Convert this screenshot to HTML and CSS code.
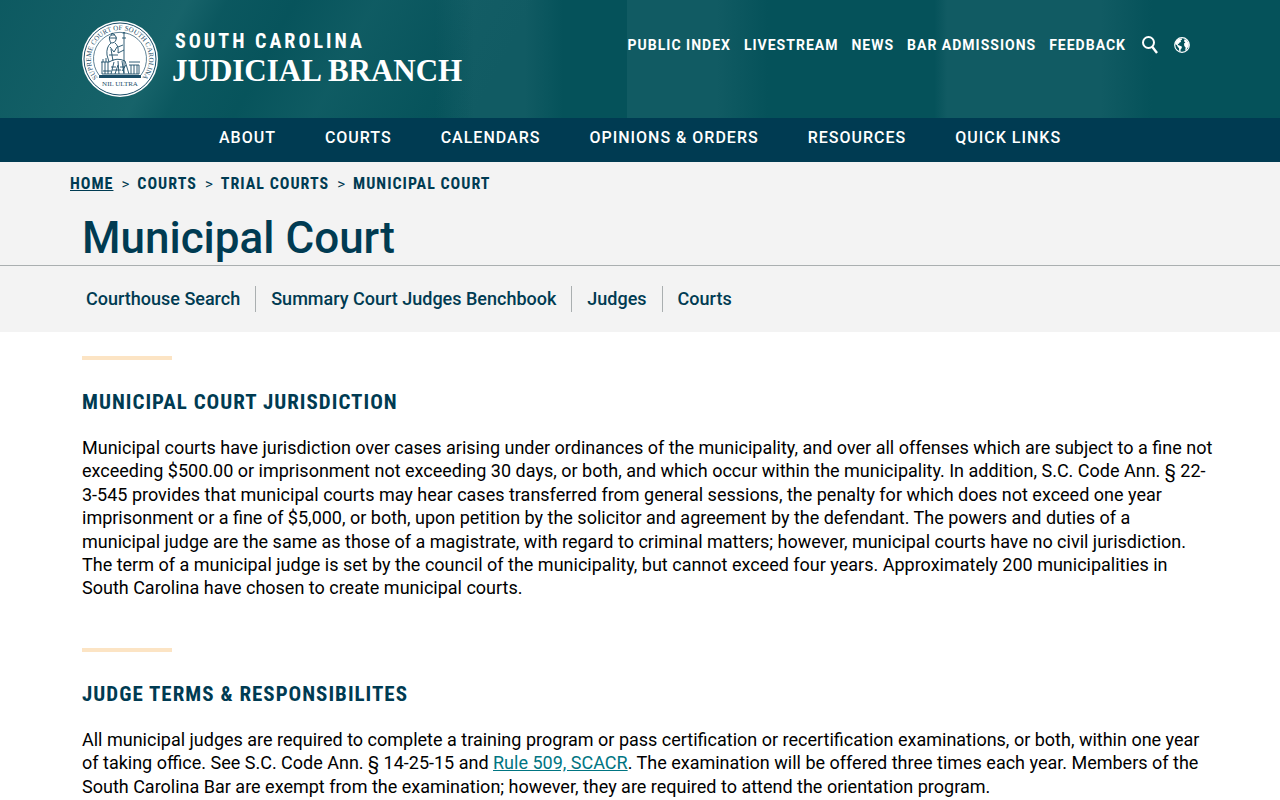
FILE: index.html
```
<!DOCTYPE html>
<html lang="en">
<head>
    <meta charset="UTF-8">
    <meta name="viewport" content="width=device-width, initial-scale=1.0">
    <title>Municipal Court - South Carolina Judicial Branch</title>
    <link rel="stylesheet" href="styles.css">
</head>
<body>
    <header class="site-header">
        <div class="container header-row">
            <a class="brand" href="#">
                <svg class="seal" viewBox="0 0 76 76" aria-hidden="true">
                    <defs>
                        <path id="seal-arc" d="M20.3 61 A29 29 0 1 1 55.7 61"/>
                    </defs>
                    <circle cx="38" cy="38" r="38" fill="#fff"/>
                    <circle cx="38" cy="38" r="36" fill="none" stroke="#1b4d68" stroke-width="1"/>
                    <path d="M17 54 A26.5 26.5 0 1 1 59 54" fill="none" stroke="#1b4d68" stroke-width="0.7"/>
                    <text class="seal-text"><textPath href="#seal-arc" startOffset="50%" text-anchor="middle">SUPREME COURT OF SOUTH CAROLINA</textPath></text>
                    <rect x="17" y="54" width="42" height="3" fill="#1b4d68"/>
                    <g fill="none" stroke="#1b4d68" stroke-width="0.9">
                        <path d="M42 13 V52 M40 17 H44 M41 13 L42 11 L43 13"/>
                        <path d="M28 20 Q26 15 30 14 Q35 13 34 19 Q33 22 30 22 Q28 22 28 20 M27 17 H35 M29 14 L30 12 L33 14"/>
                        <path d="M29 22 Q24 26 25 34 L27 41 M33 22 Q37 25 36 32 L42 29 M36 26 L41 24 M28 26 L32 31 L35 26 M27 34 H36 M29 28 L31 40"/>
                        <path d="M27 41 Q35 36 43 40 L47 53 M32 41 L29 53 M36 40 L37 53 M40 40 L42 53 M33 53 L36 44 M44 44 L40 50"/>
                        <path d="M19 41 H27 M20 41 V53 M23 41 V53 M26 41 V53 M21 38 V41 M24 37 V41 M47 41 H58 M47 44 H57 M49 44 V53 M52 44 V53 M55 44 V53 M57 44 V53"/>
                        <path d="M29 46 H34 M30 49 H39 M38 46 H43 M21 50 H29 M20 53 H57"/>
                    </g>
                    <text class="seal-text" x="38" y="65" text-anchor="middle">NIL ULTRA</text>
                </svg>
                <span class="brand-text">
                    <span class="brand-state">South Carolina</span>
                    <span class="brand-name">JUDICIAL BRANCH</span>
                </span>
            </a>
            <nav class="top-links" aria-label="Utility">
                <a href="#">Public Index</a>
                <a href="#">Livestream</a>
                <a href="#">News</a>
                <a href="#">Bar Admissions</a>
                <a href="#">Feedback</a>
                <div class="top-icons">
                    <button class="icon-button" aria-label="Search">
                        <svg viewBox="0 0 16 18" width="16" height="18" fill="none" stroke="#fff" stroke-width="2">
                            <circle cx="6.5" cy="6.5" r="5.5"/>
                            <path d="M10.2 10.8 L15 17" stroke-width="2.4"/>
                        </svg>
                    </button>
                    <button class="icon-button" aria-label="Language">
                        <svg viewBox="0 0 16 16" width="16" height="16">
                            <circle cx="8" cy="8" r="7.3" fill="none" stroke="#fff" stroke-width="1.2"/>
                            <path fill="#fff" d="M1 7 L2.5 3.5 L5 1.8 L8 1.5 L7.8 3 L6.6 3.3 L7 5 L5.6 5.6 L4.8 7 L3.8 6.4 L4 8 L5.4 8.5 L7.8 9.5 L7.8 11 L6.6 12.5 L6.4 15 L5.2 14 L5 11.2 L3.6 9.8 L3 8.2 Z"/>
                            <path fill="#fff" d="M10.5 2.2 L12.5 3 L14.8 6.5 L14.7 10 L13.2 11 L12.6 13 L11.2 13.8 L11.6 10.5 L10.3 9 L10 6.5 L11.4 5.4 L10 4.2 Z"/>
                        </svg>
                    </button>
                </div>
            </nav>
        </div>
    </header>

    <nav class="main-nav" aria-label="Main">
        <a href="#">About</a>
        <a href="#">Courts</a>
        <a href="#">Calendars</a>
        <a href="#">Opinions &amp; Orders</a>
        <a href="#">Resources</a>
        <a href="#">Quick Links</a>
    </nav>

    <section class="page-title">
        <nav class="breadcrumb" aria-label="Breadcrumb">
            <a class="home" href="#">Home</a>
            <span class="separator">&gt;</span>
            <a href="#">Courts</a>
            <span class="separator">&gt;</span>
            <a href="#">Trial Courts</a>
            <span class="separator">&gt;</span>
            <a href="#">Municipal Court</a>
        </nav>
        <div class="container">
            <h1>Municipal Court</h1>
        </div>
    </section>

    <nav class="sub-nav" aria-label="Municipal Court">
        <div class="container sub-links">
            <a href="#">Courthouse Search</a>
            <a href="#">Summary Court Judges Benchbook</a>
            <a href="#">Judges</a>
            <a href="#">Courts</a>
        </div>
    </nav>

    <main class="container">
        <section class="content-block">
            <h2>Municipal Court Jurisdiction</h2>
            <p>Municipal courts have jurisdiction over cases arising under ordinances of the municipality, and over all offenses which are subject to a fine not exceeding $500.00 or imprisonment not exceeding 30 days, or both, and which occur within the municipality. In addition, S.C. Code Ann. § 22-3-545 provides that municipal courts may hear cases transferred from general sessions, the penalty for which does not exceed one year imprisonment or a fine of $5,000, or both, upon petition by the solicitor and agreement by the defendant. The powers and duties of a<br>municipal judge are the same as those of a magistrate, with regard to criminal matters; however, municipal courts have no civil jurisdiction. The term of a municipal judge is set by the council of the municipality, but cannot exceed four years. Approximately 200 municipalities in South Carolina have chosen to create municipal courts.</p>
        </section>
        <section class="content-block">
            <h2>Judge Terms &amp; Responsibilites</h2>
            <p>All municipal judges are required to complete a training program or pass certification or recertification examinations, or both, within one year of taking office. See S.C. Code Ann. § 14-25-15 and <a href="#">Rule 509, SCACR</a>. The examination will be offered three times each year. Members of the South Carolina Bar are exempt from the examination; however, they are required to attend the orientation program.</p>
        </section>
    </main>
</body>
</html>
```
FILE: styles.css
```
* {
    box-sizing: border-box;
}
body {
    margin: 0;
    font-family: Roboto, 'Liberation Sans', sans-serif;
    font-size: 18px;
    line-height: 1.3;
    color: #000;
    background-color: #fff;
}
a {
    color: inherit;
    text-decoration: none;
}
.container {
    max-width: 1140px;
    margin: 0 auto;
    padding: 0 12px;
}

/* Header */
.site-header {
    color: #fff;
    background-color: #05525a;
    /* faint columns over the teal */
    background-image:
        linear-gradient(118deg, rgba(45, 120, 125, 0.2) 0, rgba(45, 120, 125, 0.45) 14%, rgba(45, 120, 125, 0.15) 17%, rgba(45, 120, 125, 0.05) 22%, rgba(45, 120, 125, 0.25) 28%, rgba(45, 120, 125, 0.05) 36%, transparent 40%),
        linear-gradient(90deg, transparent 34%, #115b63 37%, #115b63 41%, #05525a 44%, #05525a 49%, #115b63 49%, #115b63 56%, #05525a 60%, #05525a 73%, #115b63 74%, #115b63 86%, #05525a 90%);
}
.header-row {
    display: flex;
    justify-content: space-between;
    align-items: flex-start;
    padding-top: 21px;
    padding-bottom: 21px;
}
.brand {
    display: flex;
    align-items: center;
    gap: 14px;
}
.seal {
    width: 76px;
    height: 76px;
}
.seal-text {
    font-family: 'Liberation Serif', serif;
    font-size: 7px;
    fill: #1b4d68;
}
.brand-text {
    display: flex;
    flex-direction: column;
}
.brand-state {
    font-family: 'Roboto Condensed', Roboto, sans-serif;
    font-size: 20px;
    font-weight: 700;
    line-height: 24px;
    letter-spacing: 3px;
    text-transform: uppercase;
    padding-left: 3px;
}
.brand-name {
    font-family: 'Liberation Serif', serif;
    font-size: 31px;
    font-weight: 700;
    line-height: 36px;
}
.top-links {
    display: flex;
    align-items: center;
    gap: 13px;
    padding: 15px 8px 0 0;
    font-size: 14px;
    font-weight: 700;
    line-height: 18px;
    letter-spacing: 1px;
    text-transform: uppercase;
}
.top-icons {
    display: flex;
    align-items: center;
    gap: 16px;
    padding-left: 3px;
}
.icon-button {
    display: flex;
    padding: 0;
    border: none;
    background: none;
    cursor: pointer;
}

/* Main navigation */
.main-nav {
    display: flex;
    justify-content: center;
    gap: 49px;
    padding: 9px 12px 13px;
    background-color: #003b52;
    color: #fff;
    font-size: 16px;
    font-weight: 500;
    line-height: 22px;
    letter-spacing: 1px;
    text-transform: uppercase;
}

/* Title area */
.page-title {
    background-color: #f3f3f3;
    border-bottom: 1px solid #aaafb0;
    color: #003b52;
}
.breadcrumb {
    display: flex;
    gap: 8px;
    max-width: 1140px;
    margin: 0 auto;
    padding: 11px 0 0;
    font-family: 'Roboto Condensed', Roboto, sans-serif;
    font-size: 16px;
    font-weight: 700;
    line-height: 22px;
    letter-spacing: 1px;
    text-transform: uppercase;
}
.breadcrumb .home {
    text-decoration: underline;
}
.separator {
    font-family: Roboto, sans-serif;
    font-size: 15px;
    font-weight: 400;
    letter-spacing: 0;
}
h1 {
    margin: 0;
    padding: 17px 0 1px;
    font-size: 44px;
    font-weight: 500;
    line-height: 52px;
}
.sub-nav {
    background-color: #f3f3f3;
    color: #003b52;
    padding: 20px 0;
}
.sub-links {
    display: flex;
    font-weight: 500;
    line-height: 26px;
}
.sub-links a {
    padding: 0 15px;
    border-right: 1px solid #aaafb0;
}
.sub-links a:first-child {
    padding-left: 4px;
}
.sub-links a:last-child {
    border-right: none;
}

/* Content */
.content-block {
    padding: 24px 0;
}
.content-block::before {
    content: "";
    display: block;
    width: 90px;
    height: 4px;
    background-color: #fce4c4;
}
h2 {
    margin: 28px 0 20px;
    font-family: 'Roboto Condensed', Roboto, sans-serif;
    font-size: 21px;
    font-weight: 700;
    line-height: 28px;
    letter-spacing: 1px;
    text-transform: uppercase;
    color: #003b52;
}
p {
    margin: 0 -16px 0 0;
}
p a {
    color: #007582;
    text-decoration: underline;
}
```
